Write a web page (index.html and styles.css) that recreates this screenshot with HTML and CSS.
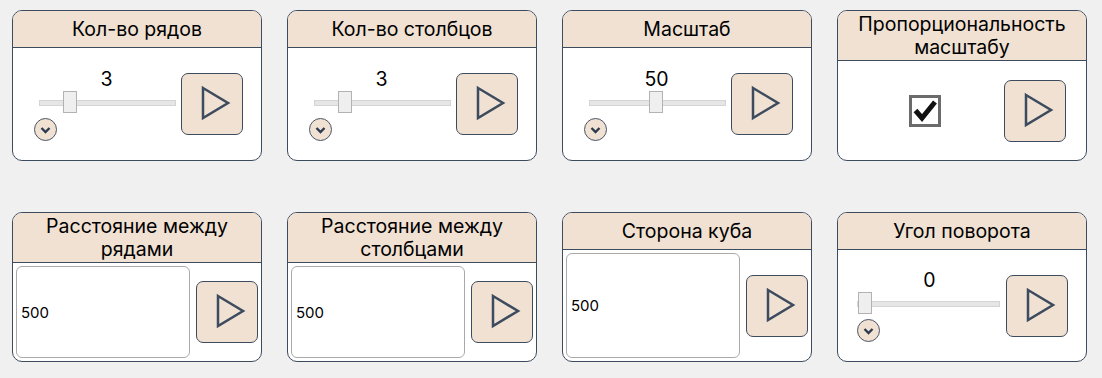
FILE: index.html
```html
<!DOCTYPE html>
<html lang="ru">
<head>
	<meta charset="UTF-8">
	<title>Параметры</title>
	<link rel="stylesheet" href="styles.css">
</head>
<body>
	<div id="panel">

		<div class="card">
			<div class="cardHead">Кол-во рядов</div>
			<div class="cardBody">
				<div class="sliderBox">
					<div class="sliderValue">3</div>
					<div class="track"><span class="thumb" style="left: 23px"></span></div>
					<span class="dropBtn"><svg viewBox="0 0 23 23" width="23" height="23"><path d="M7.5 10 L11.5 14 L15.5 10" /></svg></span>
				</div>
				<button class="runBtn"><svg viewBox="0 0 62 62" width="62" height="62"><polygon points="22,15 47,30 22,45" /></svg></button>
			</div>
		</div>

		<div class="card">
			<div class="cardHead">Кол-во столбцов</div>
			<div class="cardBody">
				<div class="sliderBox">
					<div class="sliderValue">3</div>
					<div class="track"><span class="thumb" style="left: 23px"></span></div>
					<span class="dropBtn"><svg viewBox="0 0 23 23" width="23" height="23"><path d="M7.5 10 L11.5 14 L15.5 10" /></svg></span>
				</div>
				<button class="runBtn"><svg viewBox="0 0 62 62" width="62" height="62"><polygon points="22,15 47,30 22,45" /></svg></button>
			</div>
		</div>

		<div class="card">
			<div class="cardHead">Масштаб</div>
			<div class="cardBody">
				<div class="sliderBox">
					<div class="sliderValue">50</div>
					<div class="track"><span class="thumb" style="left: 59px"></span></div>
					<span class="dropBtn"><svg viewBox="0 0 23 23" width="23" height="23"><path d="M7.5 10 L11.5 14 L15.5 10" /></svg></span>
				</div>
				<button class="runBtn"><svg viewBox="0 0 62 62" width="62" height="62"><polygon points="22,15 47,30 22,45" /></svg></button>
			</div>
		</div>

		<div class="card">
			<div class="cardHead twoLines">Пропорциональность<br>масштабу</div>
			<div class="cardBody checkBody">
				<span class="checkBox"><svg viewBox="0 0 26 26" width="26" height="26"><path d="M3.5 12.5 L10 20 L23 4" /></svg></span>
				<button class="runBtn"><svg viewBox="0 0 62 62" width="62" height="62"><polygon points="22,15 47,30 22,45" /></svg></button>
			</div>
		</div>

		<div class="card">
			<div class="cardHead twoLines">Расстояние между<br>рядами</div>
			<div class="cardBody inputBody">
				<div class="numField">500</div>
				<button class="runBtn"><svg viewBox="0 0 62 62" width="62" height="62"><polygon points="22,15 47,30 22,45" /></svg></button>
			</div>
		</div>

		<div class="card">
			<div class="cardHead twoLines">Расстояние между<br>столбцами</div>
			<div class="cardBody inputBody">
				<div class="numField">500</div>
				<button class="runBtn"><svg viewBox="0 0 62 62" width="62" height="62"><polygon points="22,15 47,30 22,45" /></svg></button>
			</div>
		</div>

		<div class="card">
			<div class="cardHead">Сторона куба</div>
			<div class="cardBody inputBody">
				<div class="numField">500</div>
				<button class="runBtn"><svg viewBox="0 0 62 62" width="62" height="62"><polygon points="22,15 47,30 22,45" /></svg></button>
			</div>
		</div>

		<div class="card">
			<div class="cardHead">Угол поворота</div>
			<div class="cardBody">
				<div class="sliderBox wide">
					<div class="sliderValue">0</div>
					<div class="track"><span class="thumb" style="left: 0px"></span></div>
					<span class="dropBtn"><svg viewBox="0 0 23 23" width="23" height="23"><path d="M7.5 10 L11.5 14 L15.5 10" /></svg></span>
				</div>
				<button class="runBtn"><svg viewBox="0 0 62 62" width="62" height="62"><polygon points="22,15 47,30 22,45" /></svg></button>
			</div>
		</div>

	</div>
</body>
</html>
```

FILE: styles.css
```css
body {
	margin: 0;
	background-color: #f0f0f0;
	font-family: "Inter", "Liberation Sans", sans-serif;
	color: #000;
}
#panel {
	display: grid;
	grid-template-columns: repeat(4, 250px);
	grid-template-rows: 151px 150px;
	column-gap: 25px;
	row-gap: 51px;
	padding: 10px 0 0 12px;
}
.card {
	display: flex;
	flex-direction: column;
	background-color: #fff;
	border: 1px solid #3d4b5f;
	border-radius: 10px;
	overflow: hidden;
}
.cardHead {
	display: flex;
	align-items: center;
	justify-content: center;
	height: 36px;
	background-color: #f0e1d2;
	border-bottom: 1px solid #3d4b5f;
	font-size: 19.5px;
	line-height: 23px;
	text-align: center;
}
.cardHead.twoLines {
	height: 49px;
}
.cardBody {
	flex: 1;
	display: flex;
	align-items: center;
	padding: 0 0 0 20px;
}
.sliderBox {
	width: 141px;
	margin-left: 1px;
	margin-right: 6px;
}
.sliderBox .track {
	margin-left: 5px;
	width: 135px;
}
.sliderBox.wide {
	margin-left: -1px;
	margin-right: 8px;
}
.sliderBox.wide .track {
	margin-left: 0;
	width: 141px;
}
.sliderValue {
	font-size: 19.5px;
	line-height: 22px;
	text-align: center;
	padding-left: 4px;
}
.track {
	position: relative;
	height: 4px;
	margin-top: 10px;
	margin-bottom: 12px;
	background-color: #e6e6e6;
	border: 1px solid #d4d4d4;
}
.thumb {
	position: absolute;
	top: -10px;
	width: 12px;
	height: 20px;
	background-color: #efefef;
	border: 1px solid #b2b2b2;
}
.dropBtn {
	display: block;
	width: 21px;
	height: 21px;
	border: 1px solid #4a5568;
	border-radius: 50%;
	background-color: #f0e1d2;
}
.dropBtn svg {
	display: block;
	margin: -1px;
}
.dropBtn path {
	fill: none;
	stroke: #2e3b4e;
	stroke-width: 2.4;
}
.runBtn {
	width: 62px;
	height: 62px;
	padding: 0;
	margin: 0;
	background-color: #f0e1d2;
	border: 1px solid #3d4b5f;
	border-radius: 7px;
}
.runBtn svg {
	display: block;
	margin: -1px;
}
.runBtn polygon {
	fill: none;
	stroke: #3d4b5f;
	stroke-width: 2.5;
}
.checkBody {
	padding-left: 71px;
}
.checkBox {
	display: block;
	width: 26px;
	height: 26px;
	margin-right: 63px;
	border: 3px solid #6b6b6b;
	background-color: #fff;
}
.checkBox svg {
	display: block;
}
.checkBox path {
	fill: none;
	stroke: #111;
	stroke-width: 5;
}
.inputBody {
	align-items: stretch;
	padding: 3px;
	gap: 6px;
}
.numField {
	flex: 1;
	display: flex;
	align-items: center;
	padding-left: 4px;
	border: 1px solid #a9a9a9;
	border-radius: 6px;
	font-size: 15px;
}
.inputBody .runBtn {
	align-self: center;
}
```
